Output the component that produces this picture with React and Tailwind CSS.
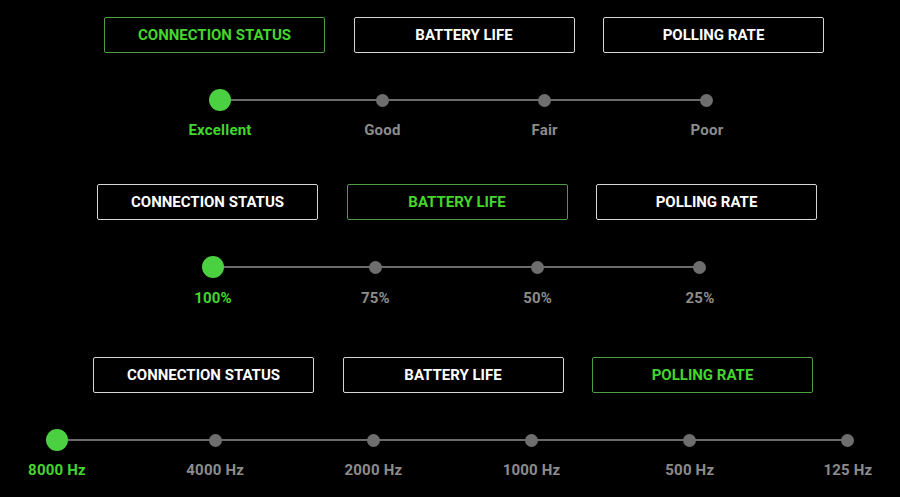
import React from "react";

const TABS = ["CONNECTION STATUS", "BATTERY LIFE", "POLLING RATE"];

function Tabs({ active }) {
  return (
    <div className="flex justify-between w-[720px]">
      {TABS.map((t, i) => (
        <div
          key={t}
          className={`w-[221px] h-[36px] pt-[1px] flex items-center justify-center rounded-[2px] border text-[15px] font-bold ${
            i === active ? "border-[#4f9d45] text-[#44d62c]" : "border-[#d6d6d6] text-white"
          }`}
        >
          {t}
        </div>
      ))}
    </div>
  );
}

function Slider({ stops, width, labelGap }) {
  return (
    <div className="relative flex justify-between" style={{ width }}>
      <div className="absolute left-0 right-0 top-[10px] h-[2px] bg-[#6b6b6b]" />
      {stops.map((s, i) => (
        <div key={s} className="relative w-0 flex flex-col items-center">
          <div className="h-[22px] flex items-center justify-center">
            {i === 0 ? (
              <div className="w-[22px] h-[22px] rounded-full bg-[#4ad041] shrink-0" />
            ) : (
              <div className="w-[13px] h-[13px] rounded-full bg-[#6e6e6e] shrink-0" />
            )}
          </div>
          <div
            className={`whitespace-nowrap text-[15px] leading-[18px] tracking-[0.2px] font-bold ${
              i === 0 ? "text-[#44d62c]" : "text-[#8c8c8c]"
            } ${labelGap}`}
          >
            {s}
          </div>
        </div>
      ))}
    </div>
  );
}

export default function App() {
  return (
    <div className="w-[900px] h-[497px] bg-black overflow-hidden font-['Roboto','Liberation_Sans',sans-serif]">
      <div className="ml-[104px] pt-[17px] flex flex-col">
        <Tabs active={0} />
        <div className="mt-[36px] ml-[116px]">
          <Slider stops={["Excellent", "Good", "Fair", "Poor"]} width={487} labelGap="mt-[10px]" />
        </div>
      </div>
      <div className="ml-[97px] mt-[45px] flex flex-col">
        <Tabs active={1} />
        <div className="mt-[36px] ml-[116px]">
          <Slider stops={["100%", "75%", "50%", "25%"]} width={487} labelGap="mt-[11px]" />
        </div>
      </div>
      <div className="ml-[93px] mt-[50px] flex flex-col">
        <Tabs active={2} />
        <div className="mt-[36px] ml-[-36px]">
          <Slider
            stops={["8000 Hz", "4000 Hz", "2000 Hz", "1000 Hz", "500 Hz", "125 Hz"]}
            width={791}
            labelGap="mt-[10px]"
          />
        </div>
      </div>
    </div>
  );
}
